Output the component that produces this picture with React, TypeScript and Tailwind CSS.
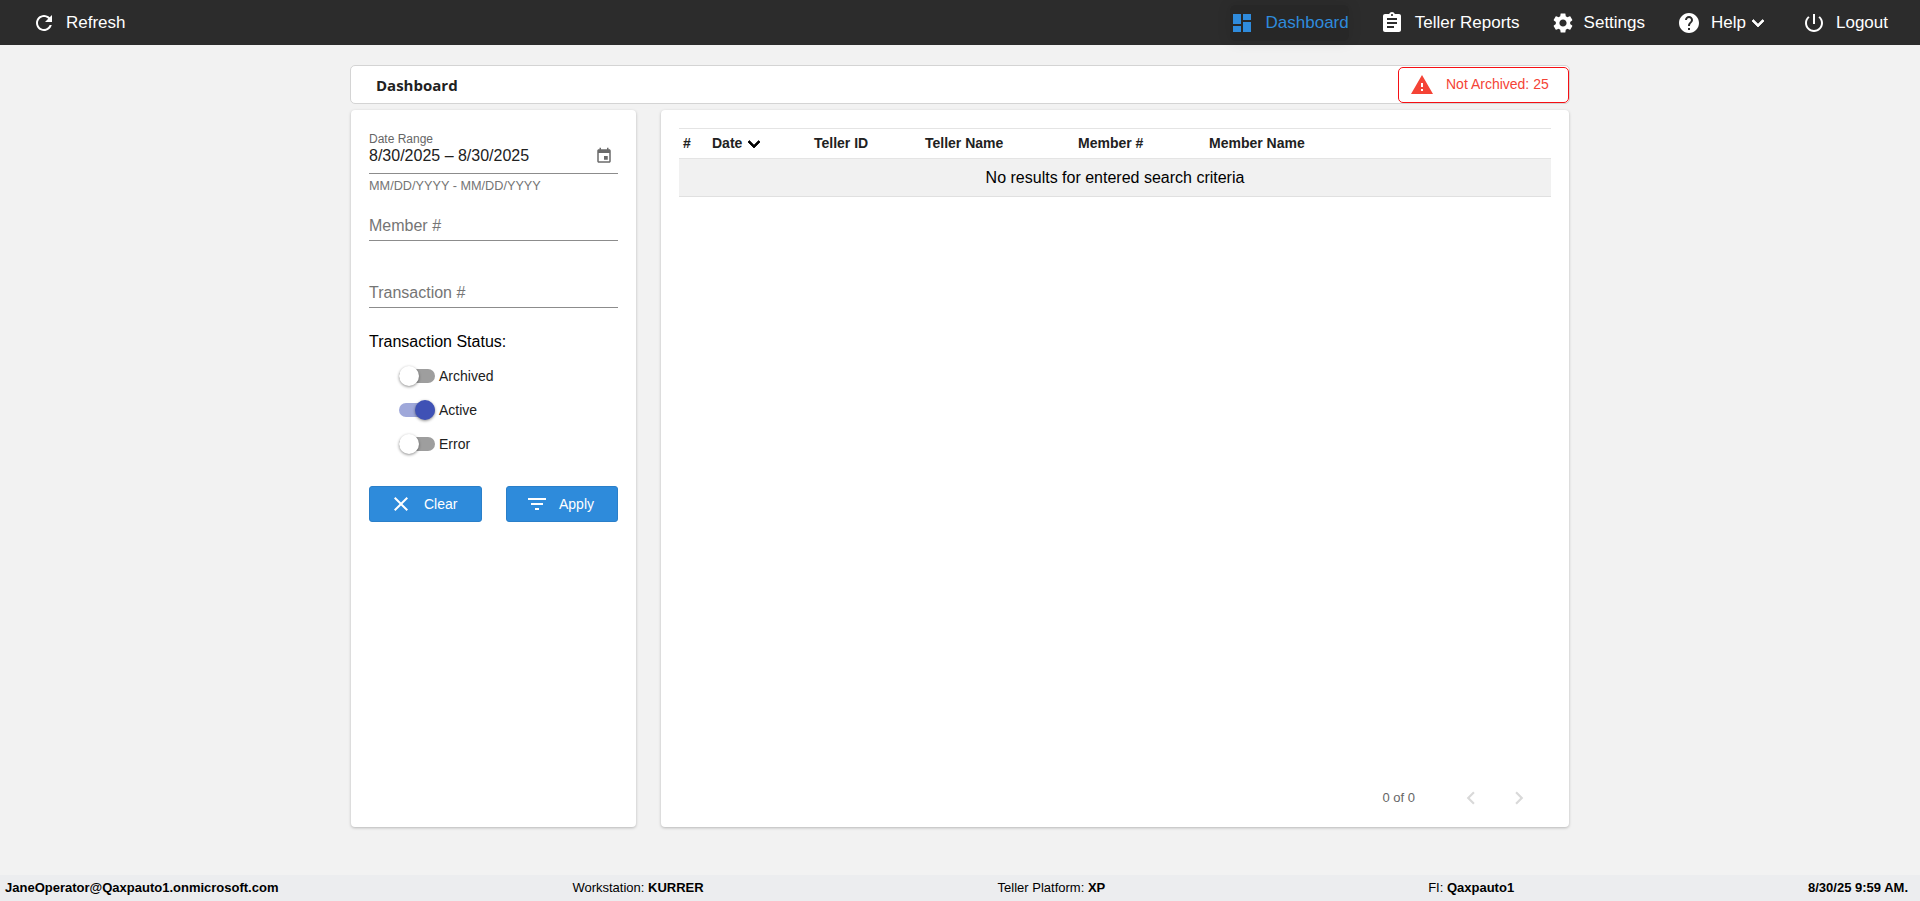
import React from 'react';

const paths = {
  refresh: "M17.65 6.35C16.2 4.9 14.21 4 12 4c-4.42 0-7.99 3.58-7.99 8s3.57 8 7.99 8c3.73 0 6.84-2.55 7.73-6h-2.08c-.82 2.33-3.04 4-5.65 4-3.31 0-6-2.69-6-6s2.69-6 6-6c1.66 0 3.14.69 4.22 1.78L13 11h7V4l-2.35 2.35z",
  dashboard: "M3 13h8V3H3v10zm0 8h8v-6H3v6zm10 0h8V11h-8v10zm0-18v6h8V3h-8z",
  assignment: "M19 3h-4.18C14.4 1.84 13.3 1 12 1c-1.3 0-2.4.84-2.82 2H5c-1.1 0-2 .9-2 2v14c0 1.1.9 2 2 2h14c1.1 0 2-.9 2-2V5c0-1.1-.9-2-2-2zm-7 0c.55 0 1 .45 1 1s-.45 1-1 1-1-.45-1-1 .45-1 1-1zm2 14H7v-2h7v2zm3-4H7v-2h10v2zm0-4H7V7h10v2z",
  settings: "M19.14 12.94c.04-.3.06-.61.06-.94 0-.32-.02-.64-.07-.94l2.03-1.58c.18-.14.23-.41.12-.61l-1.92-3.32c-.12-.22-.37-.29-.59-.22l-2.39.96c-.5-.38-1.03-.7-1.62-.94l-.36-2.54c-.04-.24-.24-.41-.48-.41h-3.84c-.24 0-.43.17-.47.41l-.36 2.54c-.59.24-1.13.57-1.62.94l-2.39-.96c-.22-.08-.47 0-.59.22L2.74 8.87c-.12.21-.08.47.12.61l2.03 1.58c-.05.3-.09.63-.09.94s.02.64.07.94l-2.03 1.58c-.18.14-.23.41-.12.61l1.92 3.32c.12.22.37.29.59.22l2.39-.96c.5.38 1.03.7 1.62.94l.36 2.54c.05.24.24.41.48.41h3.84c.24 0 .44-.17.47-.41l.36-2.54c.59-.24 1.13-.56 1.62-.94l2.39.96c.22.08.47 0 .59-.22l1.92-3.32c.12-.22.07-.47-.12-.61l-2.01-1.58zM12 15.6c-1.98 0-3.6-1.62-3.6-3.6s1.62-3.6 3.6-3.6 3.6 1.62 3.6 3.6-1.62 3.6-3.6 3.6z",
  help: "M12 2C6.48 2 2 6.48 2 12s4.48 10 10 10 10-4.48 10-10S17.52 2 12 2zm1 17h-2v-2h2v2zm2.07-7.75l-.9.92C13.45 12.9 13 13.5 13 15h-2v-.5c0-1.1.45-2.1 1.17-2.83l1.24-1.26c.37-.36.59-.86.59-1.41 0-1.1-.9-2-2-2s-2 .9-2 2H8c0-2.21 1.79-4 4-4s4 1.79 4 4c0 .88-.36 1.68-.93 2.25z",
  power: "M13 3h-2v10h2V3zm4.83 2.17l-1.42 1.42C17.99 7.86 19 9.81 19 12c0 3.87-3.13 7-7 7s-7-3.13-7-7c0-2.19 1.01-4.14 2.58-5.42L6.17 5.17C4.23 6.82 3 9.26 3 12c0 4.97 4.03 9 9 9s9-4.03 9-9c0-2.74-1.23-5.18-3.17-6.83z",
  warning: "M1 21h22L12 2 1 21zm12-3h-2v-2h2v2zm0-4h-2v-4h2v4z",
  event: "M17 12h-5v5h5v-5zM16 1v2H8V1H6v2H5c-1.11 0-1.99.9-1.99 2L3 19c0 1.1.89 2 2 2h14c1.1 0 2-.9 2-2V5c0-1.1-.9-2-2-2h-1V1h-2zm3 18H5V8h14v11z",
  chevronDown: "M7.41 8.59L12 13.17l4.59-4.58L18 10l-6 6-6-6 1.41-1.41z",
  close: "M19 6.41L17.59 5 12 10.59 6.41 5 5 6.41 10.59 12 5 17.59 6.41 19 12 13.41 17.59 19 19 17.59 13.41 12z",
  filter: "M10 18h4v-2h-4v2zM3 6v2h18V6H3zm3 7h12v-2H6v2z",
  left: "M15.41 7.41L14 6l-6 6 6 6 1.41-1.41L10.83 12z",
  right: "M10 6L8.59 7.41 13.17 12l-4.58 4.59L10 18l6-6z",
};

const Icon = ({ d, className, bold }: { d: string; className: string; bold?: boolean }) => (
  <svg
    viewBox="0 0 24 24"
    fill="currentColor"
    stroke={bold ? 'currentColor' : undefined}
    strokeWidth={bold ? 0.8 : undefined}
    className={className}
  >
    <path d={d} />
  </svg>
);

const Toggle = ({ label, on }: { label: string; on?: boolean }) => (
  <div className="flex items-center h-[34px] pl-[30px] text-[14px] text-[#212121]">
    <div className={`relative w-[36px] h-[14px] rounded-full ${on ? 'bg-[#9fa8da]' : 'bg-[#9e9e9e]'}`}>
      <div
        className={`absolute top-[-3px] w-[20px] h-[20px] rounded-full shadow-[0_1px_3px_rgba(0,0,0,0.45)] ${
          on ? 'right-0 bg-[#3f51b5]' : 'left-0 bg-white'
        }`}
      />
    </div>
    <span className="ml-[4px]">{label}</span>
  </div>
);

const NavItem = ({ d, label, className = 'gap-[10px]' }: { d: string; label: string; className?: string }) => (
  <div className={`flex items-center text-white ${className}`}>
    <Icon d={d} className="w-[24px] h-[24px]" />
    <span>{label}</span>
  </div>
);

const columns = [
  { label: '#', width: 'w-[29px]' },
  { label: 'Date', width: 'w-[102px]' },
  { label: 'Teller ID', width: 'w-[111px]' },
  { label: 'Teller Name', width: 'w-[153px]' },
  { label: 'Member #', width: 'w-[131px]' },
  { label: 'Member Name', width: 'w-[150px]' },
];

const App: React.FC = () => {
  return (
    <div className="flex flex-col h-screen bg-[#f2f2f2] font-['Liberation_Sans',Arial,sans-serif] overflow-hidden">
      <header className="flex items-center justify-between h-[45px] bg-[#2c2c2c] text-[17px] pl-[32px] pr-[32px]">
        <NavItem d={paths.refresh} label="Refresh" />
        <nav className="flex items-center">
          <div className="flex items-center gap-[12px] h-[36px] mr-[31px] text-[#2f8bdc] bg-[#272727] rounded-[6px] shadow-[0_0_12px_4px_rgba(0,0,0,0.05)]">
            <Icon d={paths.dashboard} className="w-[24px] h-[24px]" />
            <span>Dashboard</span>
          </div>
          <NavItem d={paths.assignment} label="Teller Reports" className="gap-[11px] mr-[31px]" />
          <NavItem d={paths.settings} label="Settings" className="gap-[9px] mr-[32px]" />
          <div className="flex items-center gap-[10px] mr-[32px] text-white">
            <Icon d={paths.help} className="w-[24px] h-[24px]" />
            <span className="flex items-center">
              Help
              <Icon d={paths.chevronDown} bold className="w-[24px] h-[24px]" />
            </span>
          </div>
          <NavItem d={paths.power} label="Logout" />
        </nav>
      </header>

      <main className="flex-1 w-[1220px] mx-auto pt-[20px]">
        <div className="flex items-center justify-between h-[39px] bg-white border border-[#d4d4d4] rounded-[5px]">
          <span className="pl-[25px] pt-[2px] font-['Open_Sans',sans-serif] font-bold text-[15px] text-[#212121]">Dashboard</span>
          <div className="flex items-center h-[36px] w-[171px] border-[1.5px] border-[#f50f14] rounded-[5px] pl-[11px] text-[14px] text-[#f44336]">
            <Icon d={paths.warning} className="w-[24px] h-[24px]" />
            <span className="ml-[12px]">Not Archived: 25</span>
          </div>
        </div>

        <div className="flex gap-[25px] mt-[6px] h-[717px] pl-[1px]">
          <aside className="w-[285px] bg-white rounded-[4px] shadow-[0_1px_3px_rgba(0,0,0,0.25)] px-[18px] pt-[22px]">
            <div className="text-[12px] leading-[14px] text-[#666666]">Date Range</div>
            <div className="flex items-center justify-between h-[28px] pb-[8px] border-b border-[#8c8c8c] text-[16px] text-[#212121]">
              <span>8/30/2025 – 8/30/2025</span>
              <Icon d={paths.event} className="w-[18px] h-[18px] text-[#6b6b6b] mr-[5px]" />
            </div>
            <div className="mt-[5px] text-[12.7px] leading-[14px] text-[#757575]">MM/DD/YYYY - MM/DD/YYYY</div>
            <div className="mt-[21px] h-[27px] border-b border-[#8c8c8c] text-[16px] leading-[23px] text-[#757575]">Member #</div>
            <div className="mt-[40px] h-[27px] border-b border-[#8c8c8c] text-[16px] leading-[23px] text-[#757575]">Transaction #</div>
            <div className="mt-[24px] text-[16px] leading-[20px] text-black">Transaction Status:</div>
            <div className="mt-[7px]">
              <Toggle label="Archived" />
              <Toggle label="Active" on />
              <Toggle label="Error" />
            </div>
            <div className="flex justify-between mt-[25px] text-[14px] text-white">
              <button className="flex items-center w-[113px] h-[36px] pl-[19px] gap-[11px] bg-[#2e8bdb] rounded-[3px] border border-[#2a7fc9]">
                <Icon d={paths.close} className="w-[24px] h-[24px]" />
                <span>Clear</span>
              </button>
              <button className="flex items-center w-[112px] h-[36px] pl-[18px] gap-[10px] bg-[#2e8bdb] rounded-[3px] border border-[#2a7fc9]">
                <Icon d={paths.filter} className="w-[24px] h-[24px]" />
                <span>Apply</span>
              </button>
            </div>
          </aside>

          <section className="flex flex-col w-[908px] bg-white rounded-[4px] shadow-[0_1px_3px_rgba(0,0,0,0.25)] px-[18px] pt-[18px]">
            <div className="flex items-center h-[31px] border-y border-[#e4e4e4] pl-[4px] text-[14px] font-bold text-[#212121]">
              {columns.map((c) => (
                <div key={c.label} className={`flex items-center ${c.width} shrink-0`}>
                  {c.label}
                  {c.label === 'Date' && <Icon d={paths.chevronDown} bold className="w-[24px] h-[24px] text-black" />}
                </div>
              ))}
            </div>
            <div className="flex items-center justify-center h-[38px] bg-[#f1f1f1] border-b border-[#e0e0e0] text-[16px] text-black">
              No results for entered search criteria
            </div>
            <div className="flex items-center justify-end mt-auto mb-[11px] h-[36px] text-[13px] text-[#666666]">
              <span>0 of 0</span>
              <Icon d={paths.left} className="w-[26px] h-[26px] text-[#d9d9d9] ml-[43px]" />
              <Icon d={paths.right} className="w-[26px] h-[26px] text-[#d9d9d9] ml-[22px] mr-[19px]" />
            </div>
          </section>
        </div>
      </main>

      <footer className="flex items-center justify-between h-[26px] bg-[#ecedef] pl-[5px] pr-[12px] text-[13px] text-black">
        <b>JaneOperator@Qaxpauto1.onmicrosoft.com</b>
        <span>Workstation: <b>KURRER</b></span>
        <span className="mr-[29px]">Teller Platform: <b>XP</b></span>
        <span>FI: <b>Qaxpauto1</b></span>
        <b>8/30/25 9:59 AM.</b>
      </footer>
    </div>
  );
};

export default App;
